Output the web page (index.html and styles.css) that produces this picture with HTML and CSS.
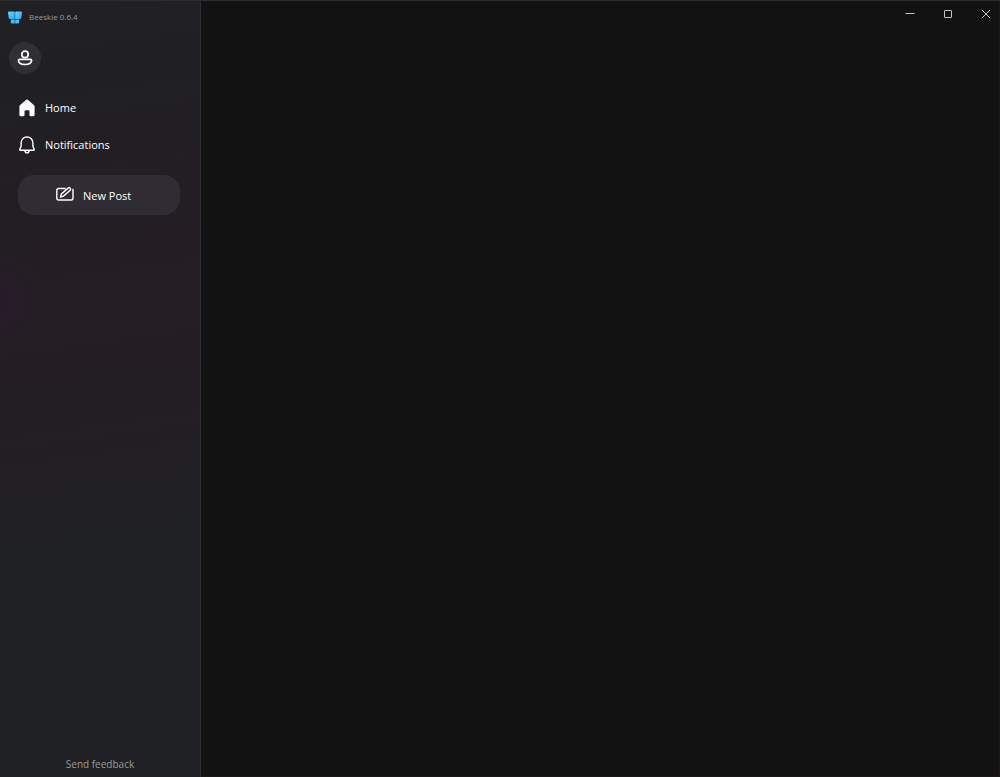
FILE: index.html
```html
<!DOCTYPE html>
<html lang="en">
<head>
<meta charset="utf-8">
<title>Beeskie</title>
<link rel="stylesheet" href="styles.css">
</head>
<body>
<div class="window">
  <aside class="sidebar">
    <header class="brand">
      <svg class="logo" viewBox="0 0 14 13" aria-hidden="true">
        <defs><linearGradient id="wing" x1="0" y1="0" x2="1" y2="1"><stop offset="0" stop-color="#6fd3fc"/><stop offset="1" stop-color="#2aa6ec"/></linearGradient></defs>
        <path fill="url(#wing)" d="M1 .5h5q.8 0 .8.800V8H2Q.8 8 .7 6.800L0 1.500Q0 .5 1 .5z"/>
        <path fill="url(#wing)" d="M13 .5H8q-.8 0-.8.800V8H12q1.200 0 1.300-1.200L14 1.500Q14 .5 13 .5z"/>
        <path fill="#45bcf7" d="M2.800 8.500h4v4H4q-1.200 0-1.200-1.200zM7.200 8.500h4v2.800q0 1.200-1.200 1.200H7.200z"/>
      </svg>
      <span>Beeskie 0.6.4</span>
    </header>
    <button class="avatar" aria-label="Account">
      <svg viewBox="0 0 16 16" aria-hidden="true"><circle cx="8" cy="4.400" r="3.200"/><path d="M2.600 9.300h10.800q1.200 0 1.200 1c0 2.700-3 4.200-6.600 4.200s-6.600-1.500-6.600-4.200Q1.400 9.300 2.600 9.300z"/></svg>
    </button>
    <nav class="nav">
      <a class="item" href="#home">
        <svg class="solid" viewBox="0 0 18 18" aria-hidden="true"><path d="M7.900 1q1.100-.9 2.200 0l5.700 4.900q.8.700.8 1.700v8.100q0 1.500-1.500 1.500h-2.300q-1.300 0-1.300-1.300v-3.700q0-1-1-1h-3q-1 0-1 1v3.700q0 1.300-1.300 1.300H2.900q-1.500 0-1.500-1.500V7.600q0-1 .8-1.700z"/></svg>
        <span>Home</span>
      </a>
      <a class="item" href="#notifications">
        <svg viewBox="0 0 18 18" aria-hidden="true"><path d="M9 1c-3.500 0-5.900 2.600-5.900 5.800v3.500L1.800 13.200q-.4 1 .7 1h13q1.100 0 .7-1l-1.300-2.900V6.800C14.900 3.600 12.500 1 9 1zM6.800 14.400c.2 3.300 4.200 3.300 4.400 0"/></svg>
        <span>Notifications</span>
      </a>
    </nav>
    <button class="compose">
      <svg viewBox="0 0 18 16" aria-hidden="true"><path d="M9.700 2.500H2.700Q.8 2.500.8 4.400v7.700q0 1.900 1.900 1.900h12.400q1.900 0 1.900-1.900V4.400q0-.8-.5-1.300M4.600 10.900l.8-2.900 6.700-5.900q1.200-1 2.100 0t0 2.100L7.500 10.100z"/></svg>
      <span>New Post</span>
    </button>
    <a class="feedback" href="#feedback">Send feedback</a>
  </aside>
  <main class="content">
    <div class="controls">
      <button aria-label="Minimize"><svg viewBox="0 0 10 10" aria-hidden="true"><path d="M.5 4.500h9"/></svg></button>
      <button aria-label="Maximize"><svg viewBox="0 0 10 10" aria-hidden="true"><rect x="1.500" y="1.500" width="7" height="7" rx=".5"/></svg></button>
      <button aria-label="Close"><svg viewBox="0 0 10 10" aria-hidden="true"><path d="M1 1l8 8M9 1L1 9"/></svg></button>
    </div>
  </main>
</div>
</body>
</html>
```
FILE: styles.css
```css
* { box-sizing: border-box; }
body {
  margin: 0;
  background: #121212;
  color: #fff;
  font: 11px/18px "Open Sans", "Noto Sans", sans-serif;
}
button {
  margin: 0;
  padding: 0;
  border: 0;
  background: none;
  color: inherit;
  font: inherit;
}
a { color: inherit; text-decoration: none; }
svg { display: block; fill: none; stroke: currentColor; flex: none; }
.window {
  display: flex;
  min-height: 100vh;
  border-top: 1px solid #2b2c2d;
}
.sidebar {
  display: flex;
  flex-direction: column;
  width: 201px;
  flex: none;
  border-right: 1px solid #2c2d30;
  background:
    radial-gradient(circle at 0 300px, rgba(38, 27, 44, .7) 0, rgba(38, 27, 44, 0) 50px),
    linear-gradient(172deg, #202125 0, #202024 90px, #231e24 200px, #251e23 320px, #231e24 420px, #202125 540px);
}
.brand {
  display: flex;
  align-items: center;
  gap: 7px;
  padding: 7px 8px 0;
  color: #98999b;
  font-size: 8px;
}
.logo { width: 14px; height: 13px; stroke: none; }
.avatar {
  display: grid;
  place-items: center;
  width: 32px;
  height: 32px;
  margin: 16px 0 0 9px;
  border-radius: 50%;
  background: #303034;
}
.avatar svg { width: 16px; height: 16px; stroke-width: 1.7; }
.nav { display: flex; flex-direction: column; margin-top: 15px; }
.item {
  display: flex;
  align-items: center;
  gap: 9px;
  height: 37px;
  padding: 0 18px;
}
.item svg { width: 18px; height: 18px; stroke-width: 1.4; }
.item .solid { fill: currentColor; stroke: none; }
.compose {
  display: flex;
  align-items: flex-start;
  gap: 9px;
  margin: 12px 20px 0 18px;
  padding: 11px 38px;
  border-radius: 16px;
  background: #2f2c33;
}
.compose svg { width: 18px; height: 16px; stroke-width: 1.4; }
.compose span { line-height: 20px; margin-bottom: -2px; }
.feedback {
  align-self: center;
  margin: auto 0 4px;
  color: #9a9b9d;
  font-size: 10px;
}
.content { flex: 1; border-right: 1px solid #181818; border-bottom: 1px solid #1c181a; }
.controls { display: flex; justify-content: flex-end; gap: 12px; }
.controls button {
  display: grid;
  place-items: center;
  width: 26px;
  height: 26px;
  color: #c4c4c4;
}
.controls svg { width: 10px; height: 10px; }
```
